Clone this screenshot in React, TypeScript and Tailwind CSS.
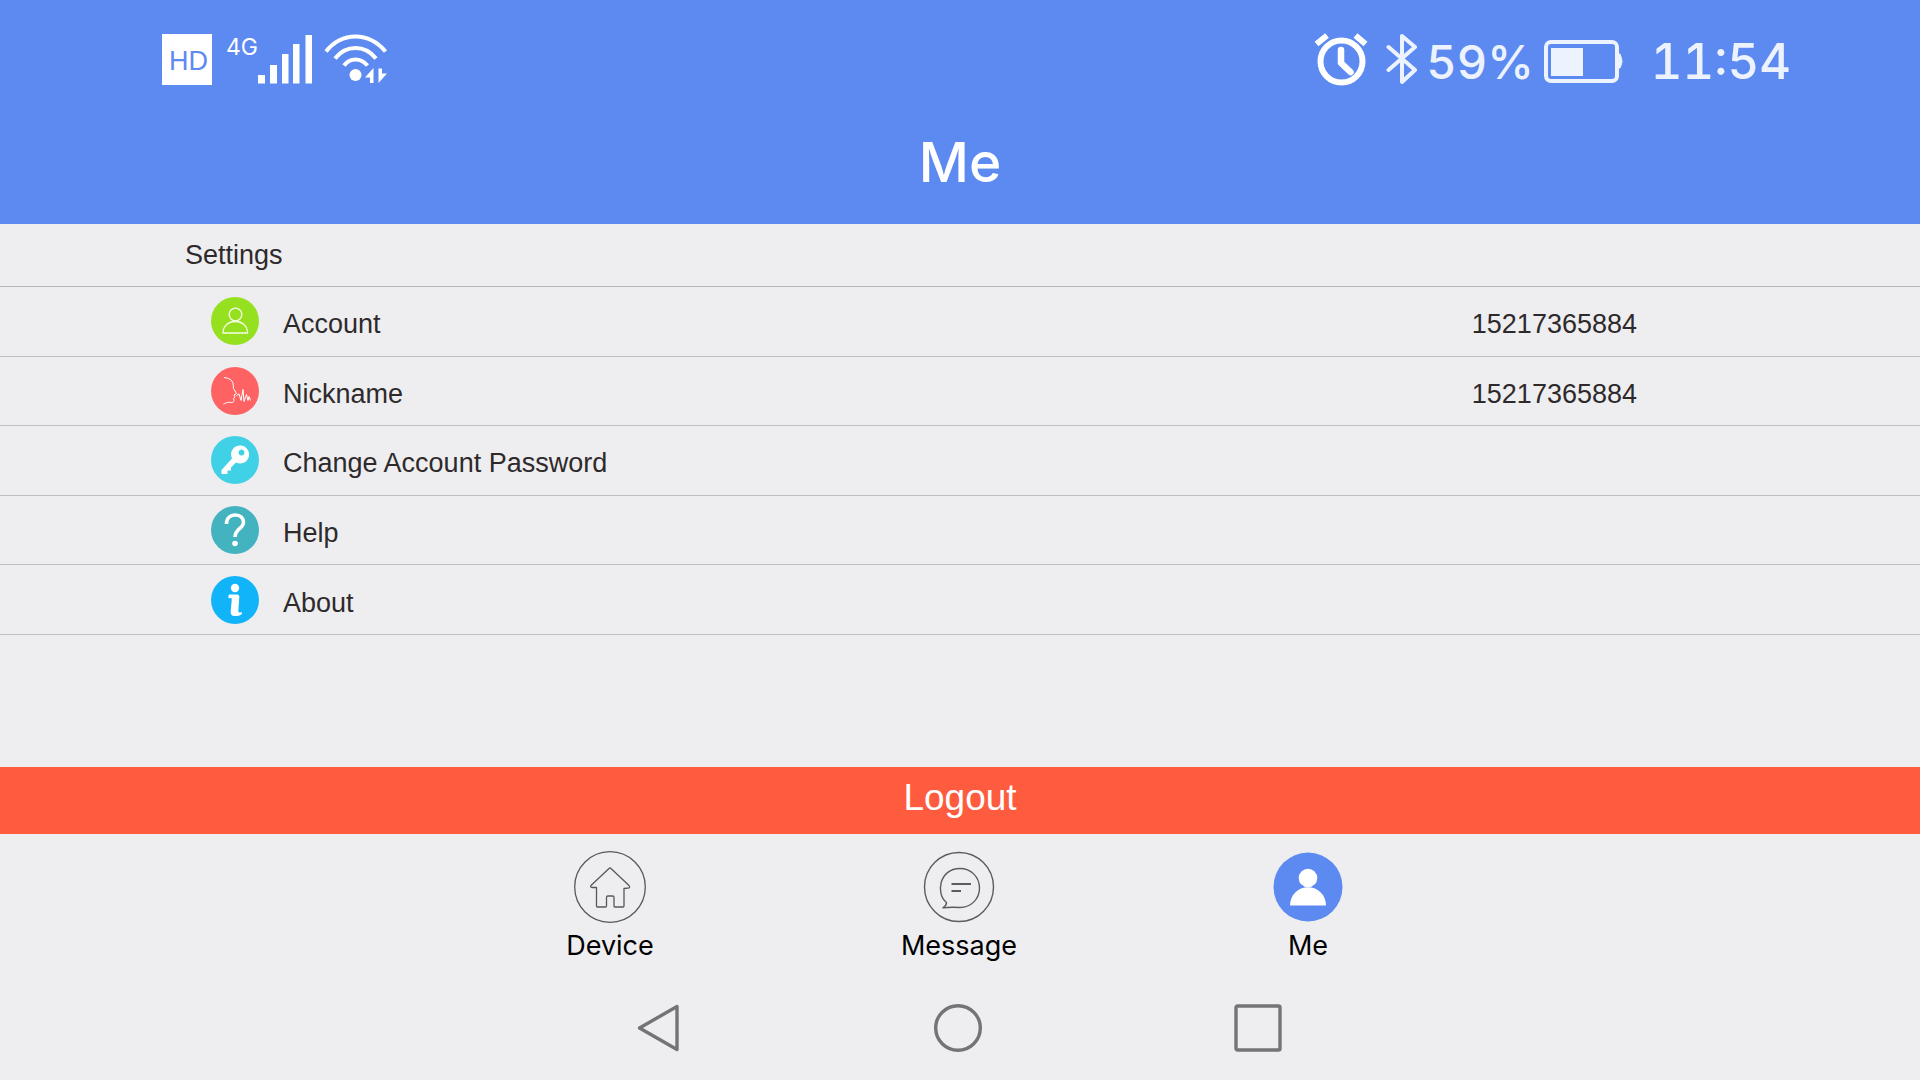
import type { ReactNode } from "react";

function HdBadge() {
  return (
    <span className="flex h-[51px] w-[50px] items-center justify-center bg-white pl-[3px] pt-1 text-[27px] leading-none text-[#5d8af1]">
      HD
    </span>
  );
}

function SignalIcon() {
  return (
    <svg viewBox="0 0 54 50" className="h-[50px] w-[54px]" fill="#fff" aria-hidden="true">
      <rect x="0" y="40" width="7" height="8.5" />
      <rect x="12" y="30" width="7" height="18.5" />
      <rect x="24" y="19" width="6.5" height="29.5" />
      <rect x="35" y="9" width="6.5" height="39.5" />
      <rect x="47.5" y="0" width="6.5" height="48.5" />
    </svg>
  );
}

function WifiIcon() {
  return (
    <svg viewBox="0 0 64 50" className="h-[50px] w-[64px]" fill="none" stroke="#fff" strokeWidth="4" aria-hidden="true">
      <path d="M2 17.5C10 7.5 20 2.5 31.500 2.500S53 7.500 61.500 17.500" />
      <path d="M11 24.500C16.500 17.500 23.500 14 31.500 14S46.500 17.500 52 24.500" />
      <path d="M20 31.500C23 27.500 27 25.500 31.500 25.500S40 27.500 43.500 31.500" />
      <circle cx="31.500" cy="41" r="6" fill="#fff" stroke="none" />
      <path d="M49.500 34V49H46V43.500H41Z" fill="#fff" stroke="none" />
      <path d="M54.500 49V34.500H58V39.500H63Z" fill="#fff" stroke="none" />
    </svg>
  );
}

function AlarmIcon() {
  return (
    <svg viewBox="0 0 54 53" className="h-[53px] w-[54px]" fill="none" stroke="#fff" aria-hidden="true">
      <circle cx="27.500" cy="28.500" r="21" strokeWidth="6" />
      <path d="M2.500 11 13 2.500M41.500 2.500 51.500 11" strokeWidth="6" />
      <path d="M27 17V30L36.500 39" strokeWidth="6.500" strokeLinecap="round" strokeLinejoin="round" />
    </svg>
  );
}

function BluetoothIcon() {
  return (
    <svg viewBox="0 0 32 52" className="h-[52px] w-[32px]" fill="none" stroke="#edf3fe" strokeWidth="4" strokeLinecap="round" strokeLinejoin="round" aria-hidden="true">
      <path d="M2.500 14 29 37 16 49V3L29 14 2.500 37" />
    </svg>
  );
}

function BatteryIcon() {
  return (
    <svg viewBox="0 0 79 43" className="h-[43px] w-[79px]" aria-hidden="true">
      <rect x="2" y="2" width="71" height="39" rx="5" fill="none" stroke="#edf3fe" strokeWidth="4" />
      <rect x="7" y="8" width="32" height="28" fill="#edf3fe" />
      <path d="M74 14h2q2 5 2 7.500T76 28h-2z" fill="#edf3fe" stroke="#edf3fe" />
    </svg>
  );
}

function RowIcon({ children, color }: { children: ReactNode; color: string }) {
  return (
    <svg viewBox="0 0 48 48" className="size-12 shrink-0" fill="none" aria-hidden="true">
      <circle cx="24" cy="24" r="24" fill={color} />
      {children}
    </svg>
  );
}

const rows: { label: string; value?: string; icon: ReactNode }[] = [
  {
    label: "Account",
    value: "15217365884",
    icon: (
      <RowIcon color="#95e01f">
        <g stroke="#f6fde8" strokeWidth="1.300" strokeLinejoin="round">
          <circle cx="24.500" cy="17.500" r="6.300" />
          <path d="M12 36C12 29 17.500 24.500 24.300 24.500S36.500 29 36.500 36Z" />
        </g>
      </RowIcon>
    ),
  },
  {
    label: "Nickname",
    value: "15217365884",
    icon: (
      <RowIcon color="#ff6262">
        <path
          d="M13 10.500C18 11 21 13 22 16 22.500 18 22 19.500 22.500 21.500L25.500 26.500 23 28 24 30 22.500 31.500 23 33.500C23 35.500 21 36 18.500 35.300 16 35 14 36.500 12.500 37M25.500 28.500 28 27 30 33.500 32 22.500 33 34.500 35.500 27.500 37 33.500 38 29.500 39.500 33.500"
          stroke="#fff"
          strokeWidth="1"
          strokeLinejoin="round"
        />
      </RowIcon>
    ),
  },
  {
    label: "Change Account Password",
    icon: (
      <RowIcon color="#41d1e6">
        <path
          fillRule="evenodd"
          fill="#fff"
          d="M29.500 9.500a9 9 0 1 1-4.500 17L20 31.500V34.500H16.500V38H10.500V34L21 22.500A9 9 0 0 1 29.500 9.500ZM30.500 13.500a3 3 0 1 0 .01 0Z"
        />
      </RowIcon>
    ),
  },
  {
    label: "Help",
    icon: (
      <RowIcon color="#43b3bf">
        <path d="M15.500 18C15.500 12.500 19 9 24.200 9S32.500 12.300 32.500 16.500C32.500 22.500 24 22.500 24 31" stroke="#fff" strokeWidth="3.600" />
        <circle cx="24" cy="37.500" r="2.800" fill="#fff" />
      </RowIcon>
    ),
  },
  {
    label: "About",
    icon: (
      <RowIcon color="#12b4f9">
        <circle cx="24" cy="12" r="4.200" fill="#fff" />
        <path
          d="M17.500 19.500Q17.500 18.500 19 18.500H26Q28.500 18.500 28.300 21L27.300 35.500Q28 37 30 36.300 31.500 36 31 37.500C30 39.500 27 40 24 40 20.500 40 19.500 38 19.700 35.500L20.800 23Q20.500 21.500 18.500 22.300 17 22.500 17.500 19.500Z"
          fill="#fff"
        />
      </RowIcon>
    ),
  },
];

const tabs: { label: string; icon: ReactNode }[] = [
  {
    label: "Device",
    icon: (
      <g stroke="#58585a" strokeWidth="1.300" strokeLinejoin="round">
        <circle cx="36" cy="36" r="35.300" />
        <path d="M35 17.500Q36 16.500 37 17.500L55 34.500Q56.500 37 54 37.200L50 37.500V55Q50 56 49 56H41Q40 56 40 55V46.500Q40 45 38.500 45H34Q32.500 45 32.500 46.500V55Q32.500 56 31.500 56H23.500Q22.500 56 22.500 55V36.500H18Q15.500 36 17.500 34Z" />
      </g>
    ),
  },
  {
    label: "Message",
    icon: (
      <g stroke="#5c5c5e" strokeWidth="1.400" strokeLinejoin="round">
        <circle cx="36" cy="36" r="34.500" />
        <path d="M20 56.800C22 55.500 23.500 53.500 23.500 51.500 12.500 43 16 17.500 37 17.500 48 17.500 56.500 26 56.500 37S48 56.500 37 56.500C31 56 26 56 20 56.800Z" />
        <path d="M28.500 33H48M28.500 40H38" strokeWidth="1.800" />
      </g>
    ),
  },
  {
    label: "Me",
    icon: (
      <g>
        <circle cx="36" cy="36" r="34.500" fill="#5d8af1" />
        <circle cx="36" cy="27" r="9.300" fill="#fff" />
        <path d="M18 54.500C18 44 26 36.300 36 36.300S54 44 54 54.500Z" fill="#fff" />
      </g>
    ),
  },
];

const systemKeys: { label: string; icon: ReactNode }[] = [
  { label: "Back", icon: <path d="M43 2.500V45.500L5.500 24Z" /> },
  { label: "Home", icon: <circle cx="24" cy="24" r="22.300" /> },
  { label: "Recent apps", icon: <rect x="2" y="2" width="44" height="44" rx="1.500" /> },
];

export default function App() {
  return (
    <div className="flex min-h-screen flex-col bg-[#eeeef0] font-['Liberation_Sans',Arial,sans-serif] text-[27px] leading-8 text-[#2e2a2b]">
      <header className="bg-[#5d8af1] pt-[31px] text-white">
        <div className="flex h-14 items-center justify-between pl-[162px] pr-[129px]">
          <div className="flex items-center">
            <HdBadge />
            <span className="ml-3.5 self-start font-[Inter,sans-serif] text-[23px] leading-7">4G</span>
            <span className="pt-0.5">
              <SignalIcon />
            </span>
            <span className="ml-3">
              <WifiIcon />
            </span>
          </div>
          <div className="flex items-center font-[Inter,sans-serif] font-medium leading-none tabular-nums text-[#edf3fe]">
            <AlarmIcon />
            <span className="ml-[18px]">
              <BluetoothIcon />
            </span>
            <span className="ml-2 pt-1 text-[47px] leading-none">59%</span>
            <span className="ml-2.5 pt-1">
              <BatteryIcon />
            </span>
            <span className="ml-7 pt-1 text-[49px]">11:54</span>
          </div>
        </div>
        <h1 className="flex h-[137px] items-center justify-center pt-3.5 font-[Inter,sans-serif] text-[55px] font-medium leading-none">
          Me
        </h1>
      </header>

      <main className="flex flex-1 flex-col">
        <h2 className="flex h-[63px] items-center border-b border-[#b4b4b6] pl-[185px]">Settings</h2>
        <ul className="grid h-[348px] grid-rows-5">
          {rows.map((row) => (
            <li key={row.label} className="border-b border-[#bfbfc1]">
              <button type="button" className="flex h-full w-full items-center pl-[211px] pr-[283px] text-left">
                {row.icon}
                <span className="ml-6 pt-1.5">{row.label}</span>
                <span className="ml-auto pt-1.5">{row.value}</span>
              </button>
            </li>
          ))}
        </ul>
        <div className="min-h-8 flex-1" />
        <button type="button" className="h-[67px] w-full bg-[#ff5b3e] pb-1.5 text-[37px] leading-none text-white">
          Logout
        </button>
      </main>

      <nav aria-label="Sections" className="flex justify-center pr-0.5 pt-[17px]">
        <div className="grid w-full max-w-[1047px] grid-cols-3">
          {tabs.map((tab) => (
            <button key={tab.label} type="button" className="flex flex-col items-center gap-[7px] font-[Inter,sans-serif] text-black">
              <svg viewBox="0 0 72 72" className="size-[72px]" fill="none" aria-hidden="true">
                {tab.icon}
              </svg>
              <span>{tab.label}</span>
            </button>
          ))}
        </div>
      </nav>

      <footer className="flex justify-center pb-7 pr-1 pt-[42px]">
        <div className="grid w-full max-w-[900px] grid-cols-3">
          {systemKeys.map((key) => (
            <button key={key.label} type="button" aria-label={key.label} className="flex justify-center">
              <svg viewBox="0 0 48 48" className="size-12" fill="none" stroke="#747476" strokeWidth="3.400" strokeLinejoin="round" aria-hidden="true">
                {key.icon}
              </svg>
            </button>
          ))}
        </div>
      </footer>
    </div>
  );
}
